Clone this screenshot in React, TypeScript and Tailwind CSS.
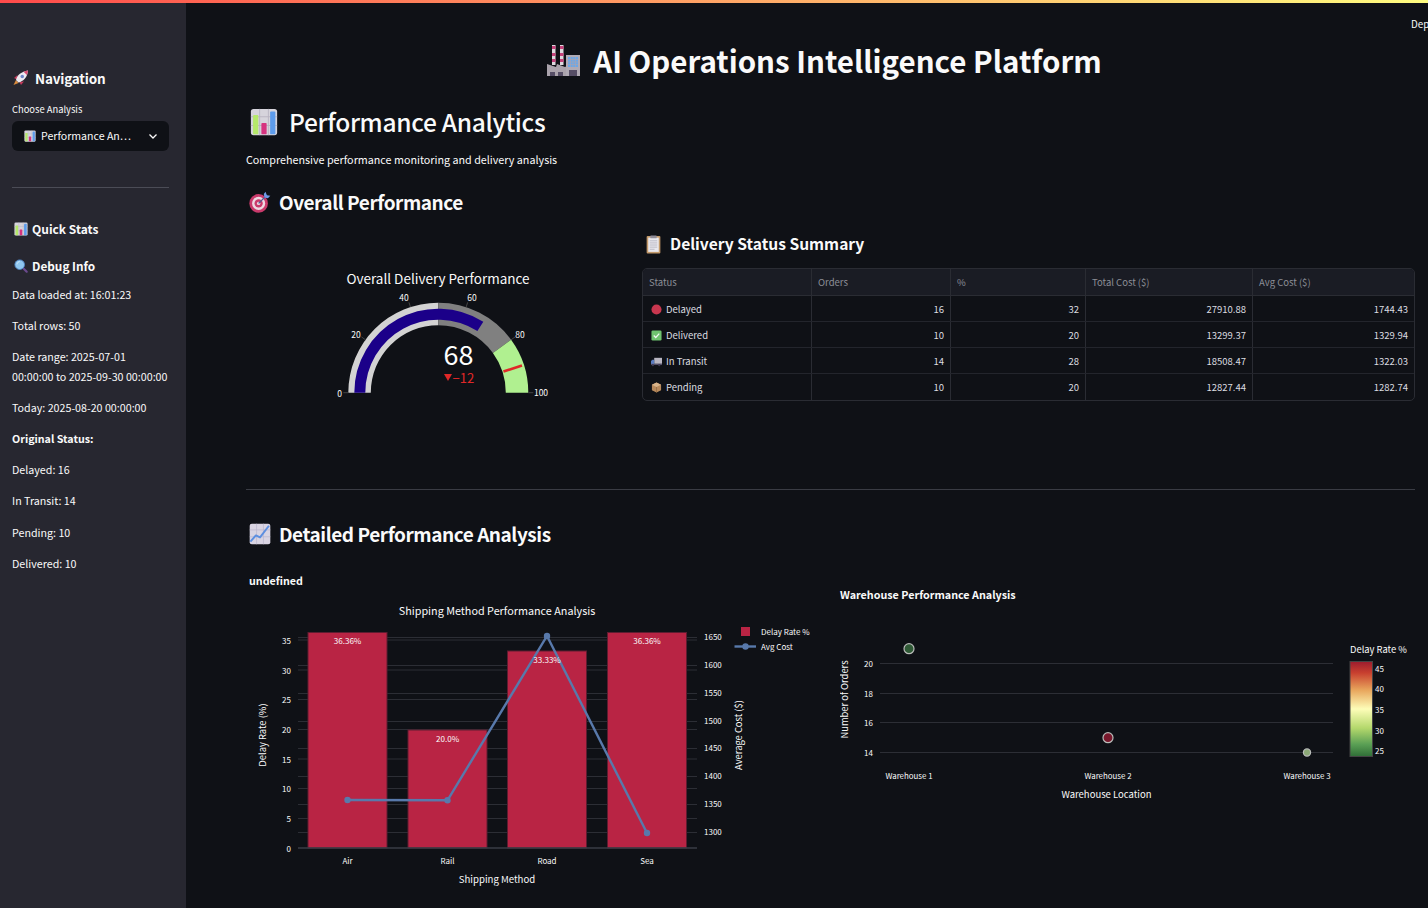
import React from "react";

function BarEmoji({ className }: { className: string }) {
  return (
    <svg viewBox="0 0 32 32" className={className}>
      <rect x="1" y="1" width="30" height="30" rx="3" fill="#d6d4dc" />
      <path d="M1 10h30M1 20h30M11 1v30M21 1v30" stroke="#b7b4c0" strokeWidth="1" />
      <rect x="3.500" y="8" width="6" height="22" rx="1" fill="#b5e86a" />
      <rect x="13" y="17" width="6" height="13" rx="1" fill="#d6337f" />
      <rect x="23" y="4" width="6" height="26" rx="1" fill="#5d9cec" />
    </svg>
  );
}

function RocketEmoji({ className }: { className: string }) {
  return (
    <svg viewBox="0 0 32 32" className={className}>
      <path d="M6 20l-5 10 10-4z" fill="#d98a3d" />
      <path d="M9 10L2 16l6 3zM22 23l-6 7-3-6z" fill="#c23a5b" />
      <path d="M6 20C8 10 17 3 30 1c-1 13-9 22-19 24z" fill="#ece9f0" />
      <path d="M21 3.500c3-1.200 6-2 9-2.500-.4 3-1 6-2.200 9z" fill="#d94b70" />
      <circle cx="18.500" cy="13" r="3.500" fill="#6d86c9" />
    </svg>
  );
}

function LensEmoji({ className }: { className: string }) {
  return (
    <svg viewBox="0 0 32 32" className={className}>
      <path d="M20 20l9 9" stroke="#6b4a8e" strokeWidth="5" strokeLinecap="round" />
      <circle cx="13" cy="13" r="11" fill="#8fc7f0" stroke="#4f86c6" strokeWidth="2" />
      <path d="M7 12c0-3 3-6 6-6" stroke="#d9eefc" strokeWidth="2" fill="none" />
    </svg>
  );
}

function FactoryEmoji({ className }: { className: string }) {
  return (
    <svg viewBox="0 0 34 33" className={className}>
      <rect x="5" y="1" width="3.500" height="20" fill="#ddd9de" />
      <rect x="13" y="1" width="3.500" height="20" fill="#ddd9de" />
      <path d="M5 2h3.500v3H5zM13 2h3.500v3H13zM5 9h3.500v3H5zM13 9h3.500v3H13zM5 15h3.500v3H5zM13 15h3.500v3H13z" fill="#c5417a" />
      <path d="M0 32V20l9 3 1-3 8 3 2-1v10z" fill="#aaa3ac" />
      <rect x="19" y="11" width="14" height="21" fill="#b0aab4" />
      <rect x="21" y="13" width="10" height="10" fill="#6aa8ea" />
      <path d="M23.500 13v10M26 13v10M28.500 13v10M21 15.500h10M21 18h10M21 20.500h10" stroke="#a9a4b0" strokeWidth=".7" />
      <rect x="22" y="26" width="8" height="6" fill="#564e66" />
      <rect x="3" y="28" width="5" height="4" fill="#564e66" />
      <rect x="11" y="28" width="5" height="4" fill="#564e66" />
    </svg>
  );
}

function TargetEmoji({ className }: { className: string }) {
  return (
    <svg viewBox="0 0 32 32" className={className}>
      <circle cx="14" cy="18" r="13.500" fill="#c93a6b" />
      <circle cx="14" cy="18" r="9.500" fill="#eed9e2" />
      <circle cx="14" cy="18" r="6" fill="#c93a6b" />
      <circle cx="14" cy="18" r="2.500" fill="#eed9e2" />
      <path d="M14 18L26 6" stroke="#4c5f94" strokeWidth="2" />
      <path d="M24 1l2 5 5 1-3.500 3.500-5-1-1-5z" fill="#6f9ae6" />
    </svg>
  );
}

function ClipboardEmoji({ className }: { className: string }) {
  return (
    <svg viewBox="0 0 28 36" className={className}>
      <rect x="1" y="2" width="26" height="33" rx="2" fill="#c39a6b" />
      <rect x="4" y="5" width="20" height="27" fill="#e9e8ee" />
      <path d="M7 11h14M7 15h14M7 19h14M7 23h14M7 27h9" stroke="#a9a7b5" strokeWidth="1.300" />
      <rect x="8" y="1" width="12" height="5" rx="1" fill="#8f8c98" />
    </svg>
  );
}

function ChartUpEmoji({ className }: { className: string }) {
  return (
    <svg viewBox="0 0 32 32" className={className}>
      <rect x="1" y="1" width="30" height="30" rx="3" fill="#d9d4e2" />
      <path d="M1 10h30M1 20h30M11 1v30M21 1v30" stroke="#b9b4cc" strokeWidth="1" />
      <path d="M2 27l8-9 6 3 13-17" stroke="#5d8fe0" strokeWidth="2.800" fill="none" strokeLinejoin="round" />
    </svg>
  );
}

function StatusIcon({ kind }: { kind: string }) {
  if (kind === "Delayed")
    return (
      <svg viewBox="0 0 12 12" className="w-[11px] h-[11px] shrink-0">
        <circle cx="6" cy="6" r="5.500" fill="#c8374f" />
      </svg>
    );
  if (kind === "Delivered")
    return (
      <svg viewBox="0 0 12 12" className="w-[11px] h-[11px] shrink-0">
        <rect x=".5" y=".5" width="11" height="11" rx="1.500" fill="#6fc46f" />
        <path d="M3 6l2.200 2.200L9 4" stroke="#eef7ee" strokeWidth="1.400" fill="none" />
      </svg>
    );
  if (kind === "In Transit")
    return (
      <svg viewBox="0 0 12 12" className="w-[11px] h-[11px] shrink-0">
        <rect x="3.500" y="2" width="8.500" height="6.500" fill="#b9b6c2" />
        <path d="M0 9V5.500L1.500 4h2v5z" fill="#5a7cc0" />
        <rect x="0" y="8.500" width="12" height="1.200" fill="#5a5470" />
        <circle cx="2" cy="10" r="1.200" fill="#3d3850" />
        <circle cx="9" cy="10" r="1.200" fill="#3d3850" />
      </svg>
    );
  return (
    <svg viewBox="0 0 12 12" className="w-[11px] h-[11px] shrink-0">
      <path d="M6 .5l5 2.500v6L6 11.500 1 9V3z" fill="#b88a5c" />
      <path d="M6 .5l5 2.500L6 5.500 1 3z" fill="#d9b48a" />
      <path d="M6 5.500v6" stroke="#8f6840" strokeWidth=".8" />
    </svg>
  );
}

const polar = (r: number, pct: number) => {
  const a = Math.PI * (1 - pct / 100);
  return [438.3 + r * Math.cos(a), 392.7 - r * Math.sin(a)];
};
const band = (r0: number, r1: number, p0: number, p1: number) => {
  const [a, b] = polar(r1, p0);
  const [c, d] = polar(r1, p1);
  const [e, f] = polar(r0, p1);
  const [g, h] = polar(r0, p0);
  return `M${a} ${b}A${r1} ${r1} 0 0 1 ${c} ${d}L${e} ${f}A${r0} ${r0} 0 0 0 ${g} ${h}Z`;
};

function Gauge() {
  const ticks: [number, number, number, string][] = [
    [0, 339.5, 396.5, "0"],
    [20, 356, 338, "20"],
    [40, 404, 301, "40"],
    [60, 472, 301, "60"],
    [80, 520, 338, "80"],
    [100, 541, 396, "100"],
  ];
  const t0 = polar(68.5, 90);
  const t1 = polar(88, 90);
  return (
    <svg viewBox="246 217 384 200" className="block w-[384px] h-[200px]">
      <text x="438" y="284" textAnchor="middle" fontSize="13.500" fill="#fafafa">
        Overall Delivery Performance
      </text>
      <path d={band(67.5, 90, 0, 50)} fill="#d3d3d3" />
      <path d={band(67.5, 90, 50, 80)} fill="#808080" />
      <path d={band(67.5, 90, 80, 100)} fill="#b0f090" />
      <path d={band(73, 84, 0, 68)} fill="#1b0089" />
      <line x1={t0[0]} y1={t0[1]} x2={t1[0]} y2={t1[1]} stroke="#e02828" strokeWidth="2.700" />
      {ticks.map(([p, x, y, l]) => {
        const a = polar(90, p);
        const b = polar(95, p);
        return (
          <g key={l}>
            <line x1={a[0]} y1={a[1]} x2={b[0]} y2={b[1]} stroke="#444" strokeWidth="1" />
            <text x={x} y={y} textAnchor="middle" fontSize="8.500" fill="#fafafa">
              {l}
            </text>
          </g>
        );
      })}
      <text x="458.500" y="365" textAnchor="middle" fontSize="27" fill="#ffffff">
        68
      </text>
      <path d="M444 374h8l-4 7z" fill="#e02828" />
      <text x="452.500" y="383" fontSize="13" fill="#e02828">
        −12
      </text>
    </svg>
  );
}

function BarChart() {
  const left: [string, number][] = [["35", 640], ["30", 670], ["25", 699.5], ["20", 729.5], ["15", 759], ["10", 788.5], ["5", 818.5], ["0", 848]];
  const right: [string, number][] = [["1650", 637.5], ["1600", 665.5], ["1550", 693.5], ["1500", 721.5], ["1450", 748.5], ["1400", 776.5], ["1350", 804.5], ["1300", 832.5]];
  const bars: [string, number, number, string][] = [
    ["Air", 308, 632.5, "36.36%"],
    ["Rail", 408, 730, "20.0%"],
    ["Road", 507.5, 651, "33.33%"],
    ["Sea", 607.5, 632.5, "36.36%"],
  ];
  const pts: [number, number][] = [[347.5, 800], [447.5, 800.3], [547, 636], [647, 833]];
  return (
    <svg viewBox="246 589 584 319" className="block w-[584px] h-[319px]">
      <text x="497" y="615" textAnchor="middle" fontSize="10.800" fill="#fafafa">
        Shipping Method Performance Analysis
      </text>
      {left.map(([l, y]) => (
        <g key={l}>
          {l !== "0" && <line x1="298" x2="697" y1={y} y2={y} stroke="#2c2e35" />}
          <text x="291" y={y + 3.5} textAnchor="end" fontSize="8" fill="#fafafa">
            {l}
          </text>
        </g>
      ))}
      {right.map(([l, y]) => (
        <g key={l}>
          <line x1="298" x2="697" y1={y} y2={y} stroke="#2c2e35" />
          <text x="704" y={y + 2.5} fontSize="8" fill="#fafafa">
            {l}
          </text>
        </g>
      ))}
      {bars.map(([l, x, y]) => (
        <rect key={l} x={x} y={y} width="79" height={848 - y} fill="#b92444" stroke="#5e1c30" />
      ))}
      <line x1="298" x2="697" y1="848" y2="848" stroke="#3a3c46" strokeWidth="1.500" />
      <polyline points={pts.map((p) => p.join(",")).join(" ")} fill="none" stroke="#5879ab" strokeWidth="2.400" />
      {pts.map((p) => (
        <circle key={p[0]} cx={p[0]} cy={p[1]} r="3.200" fill="#5879ab" />
      ))}
      {bars.map(([l, x, y, v]) => (
        <g key={l}>
          <text x={x + 39.5} y={y + 11.5} textAnchor="middle" fontSize="8.100" fill="#fafafa">
            {v}
          </text>
          <text x={x + 39.5} y="864" textAnchor="middle" fontSize="8" fill="#fafafa">
            {l}
          </text>
        </g>
      ))}
      <text x="497" y="883" textAnchor="middle" fontSize="9.600" fill="#fafafa">
        Shipping Method
      </text>
      <text transform="translate(265.500 735) rotate(-90)" textAnchor="middle" fontSize="9.400" fill="#fafafa">
        Delay Rate (%)
      </text>
      <text transform="translate(741.500 735) rotate(-90)" textAnchor="middle" fontSize="9.400" fill="#fafafa">
        Average Cost ($)
      </text>
      <rect x="741" y="627" width="9" height="9" fill="#b92444" />
      <text x="761" y="635" fontSize="8" fill="#fafafa">
        Delay Rate %
      </text>
      <line x1="734.500" x2="756" y1="646.500" y2="646.500" stroke="#5879ab" strokeWidth="2.400" />
      <circle cx="745.500" cy="646.500" r="3.200" fill="#5879ab" />
      <text x="761" y="650" fontSize="8" fill="#fafafa">
        Avg Cost
      </text>
    </svg>
  );
}

function ScatterChart() {
  const grid: [string, number][] = [["20", 663.5], ["18", 693.5], ["16", 722.5], ["14", 752.5]];
  const cbar: [string, number][] = [["45", 669], ["40", 689], ["35", 710], ["30", 731], ["25", 751]];
  const pts: [number, number, number, string][] = [
    [909, 648.7, 5, "#2f5a36"],
    [1108, 737.7, 5, "#78182c"],
    [1307, 752.5, 3.600, "#8ba876"],
  ];
  return (
    <svg viewBox="840 603 575 205" className="block w-[575px] h-[205px]">
      <defs>
        <linearGradient id="rdylgn" x1="0" y1="0" x2="0" y2="1">
          <stop offset="0" stopColor="#9c1c2e" />
          <stop offset=".12" stopColor="#c8402f" />
          <stop offset=".3" stopColor="#e8a55c" />
          <stop offset=".5" stopColor="#fdfdb8" />
          <stop offset=".7" stopColor="#b4d86c" />
          <stop offset=".87" stopColor="#5ba055" />
          <stop offset="1" stopColor="#2f6e37" />
        </linearGradient>
      </defs>
      {grid.map(([l, y]) => (
        <g key={l}>
          <line x1="880" x2="1333" y1={y} y2={y} stroke="#2c2e35" />
          <text x="873" y={y + 3} textAnchor="end" fontSize="8" fill="#fafafa">
            {l}
          </text>
        </g>
      ))}
      {pts.map(([x, y, r, c]) => (
        <circle key={x} cx={x} cy={y} r={r} fill={c} stroke="#b9bcb9" strokeWidth="1.200" />
      ))}
      {["Warehouse 1", "Warehouse 2", "Warehouse 3"].map((l, i) => (
        <text key={l} x={909 + i * 199} y="779" textAnchor="middle" fontSize="7.900" fill="#fafafa">
          {l}
        </text>
      ))}
      <text x="1106.500" y="798" textAnchor="middle" fontSize="9.500" fill="#fafafa">
        Warehouse Location
      </text>
      <text transform="translate(848 699.500) rotate(-90)" textAnchor="middle" fontSize="9.400" fill="#fafafa">
        Number of Orders
      </text>
      <text x="1350" y="653" fontSize="9.400" fill="#fafafa">
        Delay Rate %
      </text>
      <rect x="1350" y="661.500" width="22.500" height="95" fill="url(#rdylgn)" stroke="#444" />
      {cbar.map(([l, y]) => (
        <text key={l} x="1375" y={y + 3} fontSize="8" fill="#fafafa">
          {l}
        </text>
      ))}
    </svg>
  );
}

const rows = [
  ["Delayed", "16", "32", "27910.88", "1744.43"],
  ["Delivered", "10", "20", "13299.37", "1329.94"],
  ["In Transit", "14", "28", "18508.47", "1322.03"],
  ["Pending", "10", "20", "12827.44", "1282.74"],
];
const headers = ["Status", "Orders", "%", "Total Cost ($)", "Avg Cost ($)"];

function StatusTable() {
  return (
    <div className="mt-3 w-[773px] rounded-[5px] border border-[#2a2c33] overflow-hidden text-[9.5px]">
      <div className="grid grid-cols-[169px_139px_135px_167px_1fr] h-[27px] bg-[#1a1c24] text-[#8c8e96] border-b border-[#2a2c33]">
        {headers.map((h, i) => (
          <div key={h} className={`flex items-center px-[6px] pt-px ${i < 4 ? "border-r border-[#2a2c33]" : ""}`}>
            {h}
          </div>
        ))}
      </div>
      {rows.map((r, ri) => (
        <div
          key={r[0]}
          className={`grid grid-cols-[169px_139px_135px_167px_1fr] h-[26px] text-[#dcdde0] ${ri < 3 ? "border-b border-[#23252c]" : ""}`}
        >
          <div className="flex items-center gap-[4px] pl-[8px] pt-px border-r border-[#2a2c33]">
            <StatusIcon kind={r[0]} />
            <span>{r[0]}</span>
          </div>
          {r.slice(1).map((c, i) => (
            <div key={i} className={`flex items-center justify-end px-[6px] pt-px ${i < 3 ? "border-r border-[#2a2c33]" : ""}`}>
              {c}
            </div>
          ))}
        </div>
      ))}
    </div>
  );
}

export default function App() {
  return (
    <div className="relative w-[1428px] h-[908px] overflow-hidden flex flex-col bg-[#0f1116] text-[#fafafa] font-['Noto_Sans_CJK_SC','Noto_Sans',sans-serif]">
      <div className="h-[3px] shrink-0 bg-[linear-gradient(90deg,#ff4b4b,#fffd80)]" />
      <div className="flex flex-1 min-h-0">
        <aside className="w-[186px] shrink-0 bg-[#272730] pl-3 pr-[17px] flex flex-col">
          <div className="mt-[64px] h-[22px] flex items-center gap-[6px] pl-[1px]">
            <RocketEmoji className="w-[16px] h-[16px]" />
            <span className="text-[13.5px] tracking-[-0.2px] font-bold">Navigation</span>
          </div>
          <div className="mt-[12px] h-[16px] flex items-center text-[9.4px]">Choose Analysis</div>
          <div className="mt-[4px] h-[30px] rounded-md bg-[#0f1116] flex items-center pl-3 pr-[10px]">
            <BarEmoji className="w-[12px] h-[12px] shrink-0" />
            <span className="ml-[5px] text-[10.6px] flex-1 whitespace-nowrap">Performance An…</span>
            <svg viewBox="0 0 12 12" className="w-[12px] h-[12px]">
              <path d="M2.500 4.500L6 8l3.500-3.500" stroke="#fafafa" strokeWidth="1.300" fill="none" />
            </svg>
          </div>
          <div className="mt-9 h-px bg-[#4b4c56]" />
          <div className="mt-[31px] h-[20px] flex items-center gap-[4px] pl-[2px]">
            <BarEmoji className="w-[14px] h-[14px]" />
            <span className="text-[12px] font-semibold">Quick Stats</span>
          </div>
          <div className="mt-[17px] h-[20px] flex items-center gap-[4px] pl-[2px]">
            <LensEmoji className="w-[14px] h-[14px]" />
            <span className="text-[11.8px] font-semibold">Debug Info</span>
          </div>
          <div className="mt-[9px] flex flex-col gap-3 text-[10.7px] leading-[19.2px]">
            <p>Data loaded at: 16:01:23</p>
            <p>Total rows: 50</p>
            <p>Date range: 2025-07-01 00:00:00 to 2025-09-30 00:00:00</p>
            <p>Today: 2025-08-20 00:00:00</p>
            <p className="font-semibold">Original Status:</p>
            <p>Delayed: 16</p>
            <p>In Transit: 14</p>
            <p>Pending: 10</p>
            <p>Delivered: 10</p>
          </div>
        </aside>

        <main className="flex-1 min-w-0 pl-[60px] pr-[13px] flex flex-col">
          <div className="mt-[37px] h-10 flex items-center justify-center gap-[12px] pr-[12px]">
            <FactoryEmoji className="w-[34px] h-[33px]" />
            <h1 className="text-[29.5px] font-bold whitespace-nowrap">AI Operations Intelligence Platform</h1>
          </div>
          <div className="mt-[24px] h-9 flex items-center gap-[11px] pl-[4px]">
            <BarEmoji className="w-[28px] h-[28px]" />
            <h2 className="text-[24.5px] tracking-[-0.3px] font-medium whitespace-nowrap">Performance Analytics</h2>
          </div>
          <p className="mt-[10px] h-5 flex items-center text-[10.75px]">Comprehensive performance monitoring and delivery analysis</p>
          <div className="mt-[18px] h-7 flex items-center gap-[8px] pl-[3px]">
            <TargetEmoji className="w-[22px] h-[22px]" />
            <h3 className="text-[19px] tracking-[-0.45px] font-semibold whitespace-nowrap">Overall Performance</h3>
          </div>
          <div className="mt-px h-[272px] flex gap-3 shrink-0">
            <Gauge />
            <div className="flex-1 min-w-0 pt-[15px]">
              <div className="h-6 flex items-center gap-[9px] pl-1">
                <ClipboardEmoji className="w-[15px] h-[19px]" />
                <h3 className="text-[15.6px] font-semibold whitespace-nowrap">Delivery Status Summary</h3>
              </div>
              <StatusTable />
            </div>
          </div>
          <div className="h-px bg-[#3a3c44]" />
          <div className="mt-[30px] h-7 flex items-center gap-[8px] pl-[3px]">
            <ChartUpEmoji className="w-[22px] h-[22px]" />
            <h3 className="text-[19px] tracking-[-0.45px] font-semibold whitespace-nowrap">Detailed Performance Analysis</h3>
          </div>
          <div className="flex gap-[10px]">
            <div className="w-[584px]">
              <div className="mt-[26px] h-[15px] pl-[3px] flex items-center text-[10.7px] font-bold">undefined</div>
              <BarChart />
            </div>
            <div className="w-[575px]">
              <div className="mt-[40px] h-[15px] flex items-center text-[10.75px] font-bold">Warehouse Performance Analysis</div>
              <ScatterChart />
            </div>
          </div>
        </main>
      </div>
      <div className="absolute top-[17px] right-0 w-[17px] overflow-hidden text-[9.8px] whitespace-nowrap">Deploy</div>
    </div>
  );
}
